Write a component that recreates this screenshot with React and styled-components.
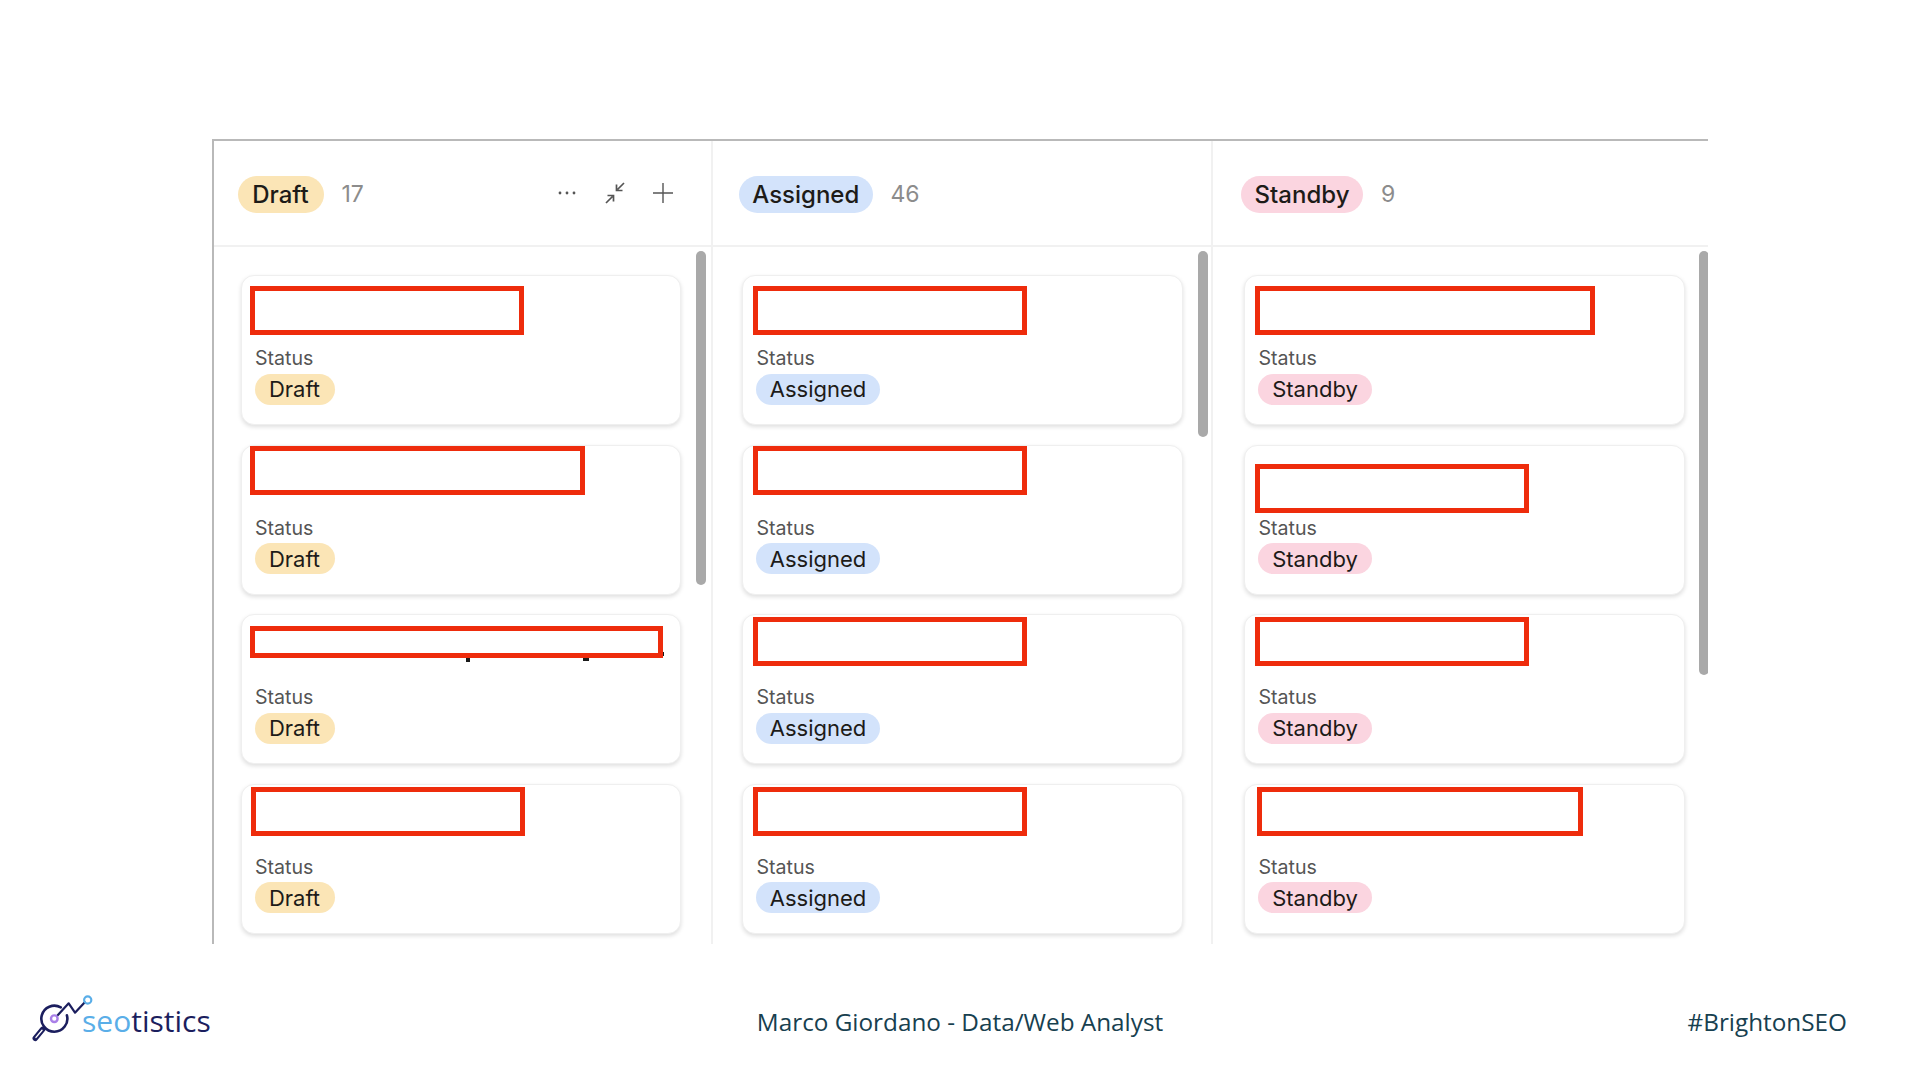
import React from 'react';
import styled, { createGlobalStyle } from 'styled-components';

const GlobalStyle = createGlobalStyle`
    html, body {
        margin: 0;
        padding: 0;
        width: 1920px;
        height: 1080px;
        overflow: hidden;
        background: #fff;
    }
`;

const Page = styled.div`
    display: flex;
    flex-direction: column;
    width: 1920px;
    height: 1080px;
    padding-top: 139px;
    box-sizing: border-box;
    font-family: Inter, "Liberation Sans", sans-serif;
`;

const Board = styled.div`
    display: flex;
    width: 1496px;
    height: 805px;
    margin-left: 212px;
    box-sizing: border-box;
    border-top: 2px solid #b9b9b9;
    border-left: 2px solid #b9b9b9;
    overflow: hidden;
`;

const Column = styled.section`
    position: relative;
    flex: none;
    width: ${({ $width }) => $width}px;
    box-sizing: border-box;
    ${({ $last }) => !$last && 'border-right: 2px solid #f1f1f1;'}
`;

const Header = styled.header`
    display: flex;
    align-items: center;
    height: 106px;
    box-sizing: border-box;
    padding-top: 3px;
    padding-left: ${({ $pad }) => $pad - 3}px;
    padding-right: 36px;
    border-bottom: 2px solid #f1f1f1;
`;

const HeaderPill = styled.span`
    display: inline-flex;
    align-items: center;
    justify-content: center;
    width: ${({ $width }) => $width}px;
    height: 37px;
    border-radius: 19px;
    background: ${({ $bg }) => $bg};
    color: #1d1b18;
    font-size: 24px;
    font-weight: 500;
`;

const Count = styled.span`
    margin: -2px 0 0 18px;
    color: #8c8c8c;
    font-size: 23px;
`;

const Actions = styled.div`
    display: flex;
    align-items: center;
    gap: 24px;
    margin-left: auto;
    margin-top: -3px;
`;

const IconBox = styled.svg`
    display: block;
    width: 24px;
    height: 24px;
    color: #555;
`;

const Body = styled.div`
    display: flex;
    flex-direction: column;
    gap: 19.5px;
    padding-top: 28px;
    padding-left: ${({ $pad }) => $pad}px;
`;

const Thumb = styled.div`
    position: absolute;
    top: 109.5px;
    left: ${({ $left }) => $left}px;
    width: 10px;
    height: ${({ $height }) => $height}px;
    border-radius: 5px;
    background: #a9a9a9;
`;

const Card = styled.article`
    position: relative;
    flex: none;
    width: 440.5px;
    height: 150px;
    box-sizing: border-box;
    padding: 70px 14px 0;
    background: #fff;
    border: 1px solid #efefef;
    border-radius: 13px;
    box-shadow: 0 2px 4px rgba(0, 0, 0, 0.13);
`;

const StatusLabel = styled.div`
    height: 24px;
    line-height: 24px;
    margin-left: -0.5px;
    color: #555;
    font-size: 19.6px;
`;

const StatusPill = styled.span`
    display: inline-flex;
    align-items: center;
    justify-content: center;
    width: ${({ $width }) => $width}px;
    height: 31px;
    margin: 3.5px 0 0 -1px;
    border-radius: 16px;
    background: ${({ $bg }) => $bg};
    color: #1d1b18;
    font-size: 22px;
`;

// red boxes that hide the card titles in the slide
const Redaction = styled.div`
    position: absolute;
    left: ${({ $x }) => $x}px;
    top: ${({ $y }) => $y}px;
    width: ${({ $w }) => $w}px;
    height: ${({ $h }) => $h}px;
    box-sizing: border-box;
    border: 5px solid #ee2c0c;
    background: #fff;
`;

// bits of the hidden title that stick out under the red box
const Scrap = styled.span`
    position: absolute;
    left: ${({ $x }) => $x}px;
    top: ${({ $y }) => $y}px;
    width: ${({ $w }) => $w}px;
    height: ${({ $h }) => $h}px;
    background: #1a1a1a;
`;

const Footer = styled.footer`
    flex: 1;
    display: grid;
    grid-template-columns: 1fr auto 1fr;
    align-items: center;
    padding: 18px 32px 0;
    font-family: "Open Sans", "Noto Sans", sans-serif;
    font-size: 24.3px;
    color: #17404f;
`;

const Logo = styled.div`
    display: flex;
    align-items: flex-end;
    margin-top: -8px;
`;

const LogoMark = styled.svg`
    display: block;
    flex: none;
    width: 64px;
    height: 52px;
    margin-left: -1px;
`;

const LogoText = styled.span`
    margin: 0 0 2.5px -13px;
    font-size: 30px;
    line-height: 40px;
    color: #1b1e5e;
`;

const LogoBlue = styled.span`
    color: #5aaee8;
`;

const Tag = styled.span`
    justify-self: end;
    margin-right: 41px;
`;

const Dots = () => (
    <IconBox viewBox="0 0 24 24" fill="currentColor">
        <circle cx="5" cy="12" r="1.4" />
        <circle cx="12" cy="12" r="1.4" />
        <circle cx="19" cy="12" r="1.4" />
    </IconBox>
);

const Compress = () => (
    <IconBox viewBox="0 0 24 24" fill="none" stroke="currentColor" strokeWidth="1.7">
        <path d="M3 22 L9.5 15.5 M4.5 14.5 H10.5 V20.5" />
        <path d="M21 2 L14.5 8.5 M13.5 3.5 V9.5 H19.5" />
    </IconBox>
);

const Plus = () => (
    <IconBox viewBox="0 0 24 24" fill="none" stroke="currentColor" strokeWidth="1.4">
        <path d="M2 12 H22 M12 2 V22" />
    </IconBox>
);

const columns = [
    {
        name: 'Draft', count: 17, bg: '#fbe5b6', width: 498.5, pad: 26.5, thumbLeft: 482, thumbHeight: 334, actions: true,
        headerPill: 86, statusPill: 80,
        boxes: [
            { x: 8.5, y: 10, w: 274, h: 49 },
            { x: 8.5, y: 0, w: 335, h: 49 },
            { x: 8.5, y: 10.5, w: 413, h: 32 },
            { x: 9, y: 2.5, w: 274, h: 49 },
        ],
    },
    {
        name: 'Assigned', count: 46, bg: '#d3e3fb', width: 500, pad: 29.5, thumbLeft: 485, thumbHeight: 186,
        headerPill: 133.5, statusPill: 124,
        boxes: [
            { x: 10, y: 10, w: 274, h: 49 },
            { x: 10, y: 0, w: 274, h: 49 },
            { x: 10, y: 2, w: 274, h: 49 },
            { x: 9.5, y: 2.5, w: 274, h: 49 },
        ],
    },
    {
        name: 'Standby', count: 9, bg: '#fbd5e0', width: 495.5, pad: 31.5, thumbLeft: 486.5, thumbHeight: 424,
        headerPill: 122, statusPill: 114,
        boxes: [
            { x: 10, y: 10, w: 340, h: 49 },
            { x: 10, y: 18, w: 274, h: 49 },
            { x: 10, y: 2, w: 274, h: 49 },
            { x: 12, y: 2.5, w: 326, h: 49 },
        ],
    },
];

const App = () => (
    <Page>
        <GlobalStyle />
        <Board>
            {columns.map(col => (
                <Column key={col.name} $width={col.width} $last={col.name === 'Standby'}>
                    <Header $pad={col.pad}>
                        <HeaderPill $bg={col.bg} $width={col.headerPill}>{col.name}</HeaderPill>
                        <Count>{col.count}</Count>
                        {col.actions && (
                            <Actions>
                                <Dots />
                                <Compress />
                                <Plus />
                            </Actions>
                        )}
                    </Header>
                    <Body $pad={col.pad}>
                        {col.boxes.map((box, i) => (
                            <Card key={i}>
                                {col.name === 'Draft' && i === 2 && (
                                    <>
                                        <Scrap $x={224} $y={41} $w={4} $h={6} />
                                        <Scrap $x={341} $y={41} $w={6} $h={5} />
                                        <Scrap $x={419} $y={37} $w={3} $h={4} />
                                    </>
                                )}
                                <Redaction $x={box.x} $y={box.y} $w={box.w} $h={box.h} />
                                <StatusLabel>Status</StatusLabel>
                                <StatusPill $bg={col.bg} $width={col.statusPill}>{col.name}</StatusPill>
                            </Card>
                        ))}
                    </Body>
                    <Thumb $left={col.thumbLeft} $height={col.thumbHeight} />
                </Column>
            ))}
        </Board>
        <Footer>
            <Logo>
                <LogoMark viewBox="0 0 64 52" fill="none" strokeLinecap="round" strokeLinejoin="round">
                    <path d="M29.8 16.4 A13 13 0 1 0 35.9 24.3" stroke="#1b1e5e" strokeWidth="2.6" />
                    <path d="M11.7 38.3 L4.3 47.3" stroke="#1b1e5e" strokeWidth="5.5" />
                    <path d="M11 39.2 L5 46.4" stroke="#fff" strokeWidth="1.4" />
                    <path d="M26 25 L37.7 12.3 L44 21.7 L53.8 11.3" stroke="#1b1e5e" strokeWidth="2.2" />
                    <circle cx="23.3" cy="27.7" r="3.3" stroke="#a97fe8" strokeWidth="2.4" />
                    <circle cx="56.7" cy="9" r="3.6" stroke="#5aaee8" strokeWidth="2.2" />
                </LogoMark>
                <LogoText><LogoBlue>seo</LogoBlue>tistics</LogoText>
            </Logo>
            <span>Marco Giordano - Data/Web Analyst</span>
            <Tag>#BrightonSEO</Tag>
        </Footer>
    </Page>
);

export default App;
